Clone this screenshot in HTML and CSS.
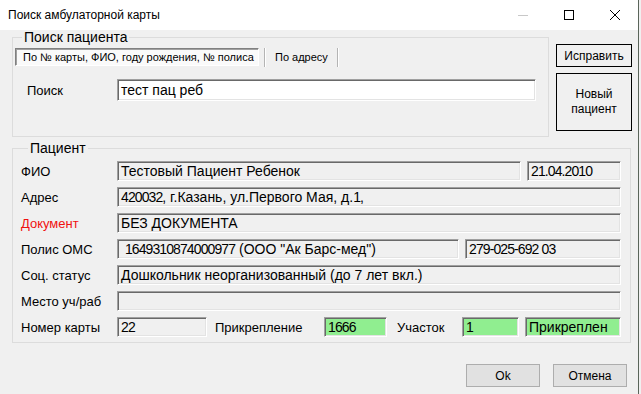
FILE: index.html
```html
<!DOCTYPE html>
<html lang="ru">
<head>
    <meta charset="UTF-8">
    <meta name="viewport" content="width=device-width, initial-scale=1.0">
    <title>Поиск амбулаторной карты</title>
    <link rel="stylesheet" href="styles.css">
</head>
<body>
    <div class="window">
        <div class="titlebar">
            <span class="title">Поиск амбулаторной карты</span>
            <div class="controls">
                <span class="ctl">
                    <svg width="10" height="10" viewBox="0 0 10 10"><path d="M0 5.5H10" stroke="#c8c8c8" stroke-width="1"/></svg>
                </span>
                <span class="ctl">
                    <svg width="10" height="10" viewBox="0 0 10 10"><rect x="0.5" y="0.5" width="9" height="9" fill="none" stroke="#000" stroke-width="1"/></svg>
                </span>
                <span class="ctl">
                    <svg width="10" height="10" viewBox="0 0 10 10"><path d="M0 0L10 10M10 0L0 10" stroke="#000" stroke-width="1"/></svg>
                </span>
            </div>
        </div>

        <div class="content">
            <div class="top">
                <fieldset class="group search-group">
                    <legend>Поиск пациента</legend>
                    <div class="tabs">
                        <span class="tab active">По № карты, ФИО, году рождения, № полиса</span>
                        <span class="sep"></span>
                        <span class="tab">По адресу</span>
                        <span class="sep"></span>
                    </div>
                    <div class="search-row">
                        <span class="search-label">Поиск</span>
                        <div class="field white search-field">тест пац реб</div>
                    </div>
                </fieldset>
                <div class="side-buttons">
                    <button class="flat">Исправить</button>
                    <button class="flat tall">Новый<br>пациент</button>
                </div>
            </div>

            <fieldset class="group patient">
                <legend>Пациент</legend>
                <div class="row">
                    <span class="lbl">ФИО</span>
                    <div class="field fio">Тестовый Пациент Ребенок</div>
                    <div class="field date"><span class="num">21.04.2010</span></div>
                </div>
                <div class="row">
                    <span class="lbl">Адрес</span>
                    <div class="field grow"><span class="num">420032</span>, г.Казань, ул.Первого Мая, д.<span class="num">1</span>,</div>
                </div>
                <div class="row">
                    <span class="lbl red">Документ</span>
                    <div class="field grow">БЕЗ ДОКУМЕНТА</div>
                </div>
                <div class="row">
                    <span class="lbl">Полис ОМС</span>
                    <div class="field polis">&nbsp;<span class="num">1649310874000977</span> (ООО "Ак Барс-мед")</div>
                    <div class="field snils"><span class="num">279-025-692 03</span></div>
                </div>
                <div class="row">
                    <span class="lbl">Соц. статус</span>
                    <div class="field grow">Дошкольник неорганизованный (до 7 лет вкл.)</div>
                </div>
                <div class="row">
                    <span class="lbl">Место уч/раб</span>
                    <div class="field grow"></div>
                </div>
                <div class="row">
                    <span class="lbl">Номер карты</span>
                    <div class="field card"><span class="num">22</span></div>
                    <span class="lbl-inline attach-lbl">Прикрепление</span>
                    <div class="field green attach"><span class="num">1666</span></div>
                    <span class="lbl-inline area-lbl">Участок</span>
                    <div class="field green area">1</div>
                    <div class="field green status">Прикреплен</div>
                </div>
            </fieldset>

            <div class="footer">
                <button class="btn">Ok</button>
                <button class="btn">Отмена</button>
            </div>
        </div>
    </div>
</body>
</html>
```

FILE: styles.css
```css
* {
    box-sizing: border-box;
}
body {
    margin: 0;
    background-color: #f0f0f0;
    font-family: "Liberation Sans", Arial, sans-serif;
    color: #000;
}
.window {
    width: 639px;
    height: 394px;
    background-color: #f0f0f0;
    border-right: 1px solid #5a655a;
}
.titlebar {
    height: 30px;
    background: #fff;
    display: flex;
    align-items: center;
    justify-content: space-between;
}
.title {
    padding-left: 8px;
    font-size: 12px;
}
.controls {
    display: flex;
    height: 30px;
}
.ctl {
    width: 46px;
    height: 30px;
    display: flex;
    align-items: center;
    justify-content: center;
}
.content {
    padding-left: 12px;
}
.top {
    display: flex;
    align-items: flex-start;
    gap: 7px;
}
.group {
    margin: 0;
    border: 1px solid #dcdcdc;
    padding: 0;
    min-width: 0;
}
.group legend {
    font-size: 14px;
    line-height: 14px;
    padding: 0 2px;
    margin-left: 7px;
}
.search-group {
    width: 537px;
    padding: 0 0 35px 2px;
}
.tabs {
    display: flex;
    align-items: center;
    margin-top: 4px;
    height: 18px;
    font-size: 11px;
    white-space: nowrap;
}
.tab {
    line-height: 16px;
    padding: 0 4px 0 6px;
}
.tab.active {
    height: 18px;
    width: 244px;
    padding: 0 0 0 7px;
    background: #fafafa;
    border: 1px solid;
    border-color: #808080 #fff #fff #808080;
    box-shadow: inset 1px 1px 0 #a0a0a0;
    overflow: hidden;
}
.sep {
    width: 2px;
    height: 19px;
    border-left: 1px solid #b4b4b4;
    border-right: 1px solid #fff;
    margin: 0 3px 0 5px;
}
.search-row {
    display: flex;
    align-items: center;
    margin-top: 13px;
}
.search-label {
    width: 102px;
    padding-left: 12px;
    font-size: 13px;
}
.field {
    height: 20px;
    border: 1px solid;
    border-color: #a0a0a0 #fff #fff #a0a0a0;
    box-shadow: inset 1px 1px 0 #696969, inset -1px -1px 0 #e3e3e3;
    padding: 0 0 0 3px;
    font-size: 14px;
    line-height: 18px;
    white-space: nowrap;
    overflow: hidden;
    background: #f0f0f0;
}
.num {
    letter-spacing: -0.9px;
}
.field.white {
    background: #fff;
}
.field.green {
    background: #90ee90;
}
.search-field {
    width: 419px;
    height: 22px;
    line-height: 20px;
}
.side-buttons {
    display: flex;
    flex-direction: column;
    gap: 6px;
    margin-top: 14px;
}
.flat {
    width: 76px;
    height: 23px;
    background: #f0f0f0;
    border: 1px solid #000;
    font-family: inherit;
    font-size: 12px;
    padding: 0;
    color: #000;
}
.flat.tall {
    height: 58px;
    line-height: 15px;
}
.patient {
    width: 619px;
    margin-top: 4px;
    padding: 6px 9px 5px 8px;
}
.row {
    display: flex;
    align-items: center;
    height: 20px;
    margin-bottom: 6px;
}
.row:last-child {
    margin-bottom: 0;
}
.lbl {
    width: 96px;
    font-size: 13px;
    flex: none;
}
.lbl.red {
    color: #f01010;
}
.lbl-inline {
    font-size: 13px;
}
.grow {
    flex: 1;
}
.fio {
    width: 404px;
}
.date {
    width: 94px;
    margin-left: 6px;
}
.polis {
    width: 342px;
}
.snils {
    width: 156px;
    margin-left: 6px;
}
.card {
    width: 90px;
}
.attach-lbl {
    margin-left: 8px;
    width: 109px;
}
.attach {
    width: 63px;
}
.area-lbl {
    margin-left: 10px;
    width: 65px;
}
.area {
    width: 57px;
}
.status {
    width: 96px;
    margin-left: 6px;
}
.footer {
    display: flex;
    justify-content: flex-end;
    gap: 13px;
    margin-top: 21px;
    padding-right: 11px;
}
.btn {
    width: 74px;
    height: 23px;
    background: #e1e1e1;
    border: 1px solid #adadad;
    font-family: inherit;
    font-size: 12px;
    color: #000;
    padding: 0;
}
```
